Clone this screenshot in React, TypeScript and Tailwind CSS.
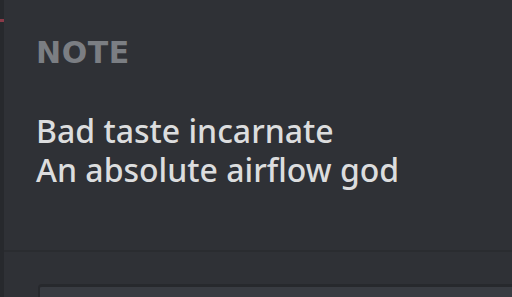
export default function App() {
  return (
    <div className="flex h-[297px] w-[512px] overflow-hidden bg-[#2f3136] font-['Noto_Sans',sans-serif]">
      {/* left edge */}
      <div className="relative w-[4px] shrink-0 bg-[#27292d]">
        <div className="absolute left-0 top-[19px] h-[3px] w-[4px] bg-[#8a3a48]" />
      </div>

      <div className="flex flex-1 flex-col">
        <div className="border-b-2 border-[#2a2c30] pl-[32px] pt-[36px] pb-[61px]">
          <h2 className="font-['DejaVu_Sans',sans-serif] text-[30px] font-bold uppercase leading-[34px] tracking-[0.02em] text-[#7b7e83]">
            Note
          </h2>
          <div className="mt-[41px] text-[32px] font-medium leading-[39px] text-[#dcddde]">
            <p>Bad taste incarnate</p>
            <p>An absolute airflow god</p>
          </div>
        </div>

        <div className="flex-1 pl-[34px] pt-[32px]">
          <div className="h-full rounded-tl-[4px] border-t-[3px] border-l-[2px] border-[#27292d] bg-[#393c42]" />
        </div>
      </div>
    </div>
  );
}
